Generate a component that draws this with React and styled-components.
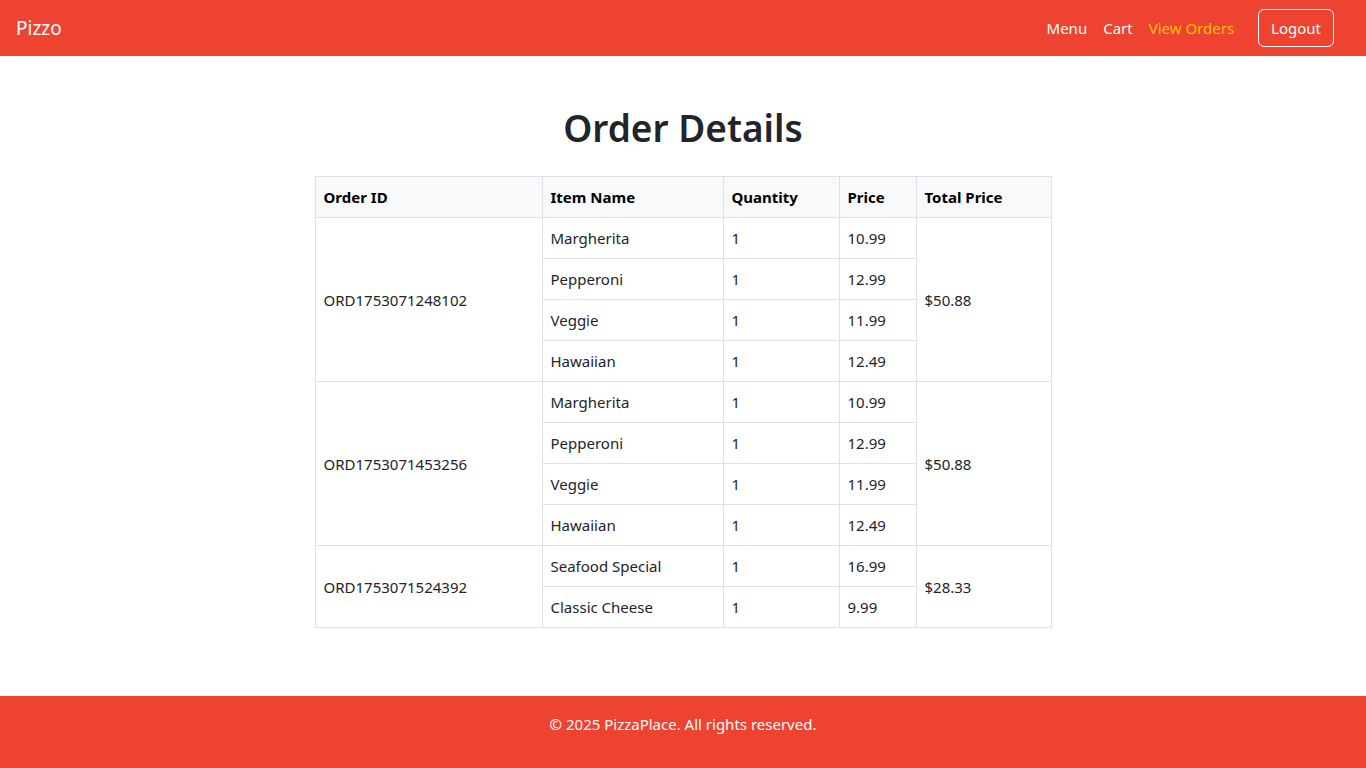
import React from 'react';
import styled, { createGlobalStyle } from 'styled-components';

const GlobalStyle = createGlobalStyle`
    * {
        box-sizing: border-box;
    }

    body {
        margin: 0;
        font-family: "Noto Sans", "Open Sans", sans-serif;
        font-size: 15px;
        line-height: 24px;
        color: #212529;
        background: #fff;
    }
`;

const Page = styled.div`
    min-height: 768px;
    display: flex;
    flex-direction: column;
`;

const Navbar = styled.nav`
    height: 56px;
    background-color: #ee4331;
    display: flex;
    align-items: center;
    justify-content: space-between;
    padding: 0 32px 0 16px;
`;

const Brand = styled.a`
    color: #fff;
    font-size: 19px;
    text-decoration: none;
`;

const NavLinks = styled.div`
    display: flex;
    align-items: center;
    gap: 16px;
`;

const NavLink = styled.a`
    color: ${props => props.active ? '#ffc107' : '#fff'};
    text-decoration: none;
    font-size: 15px;
`;

const LogoutButton = styled.button`
    margin-left: 8px;
    background: transparent;
    color: #fff;
    border: 1px solid #fff;
    border-radius: 6px;
    padding: 6px 12px;
    font-family: inherit;
    font-size: 15px;
    line-height: 24px;
`;

const Main = styled.main`
    flex: 1 0 auto;
    padding-top: 48px;
    padding-bottom: 68px;
    display: flex;
    flex-direction: column;
    align-items: center;
`;

const Title = styled.h1`
    margin: 0 0 24px;
    font-size: 37px;
    font-weight: 600;
    line-height: 48px;
`;

const OrdersTable = styled.table`
    width: 736px;
    table-layout: fixed;
    border-collapse: collapse;

    th, td {
        border: 1px solid #dee2e6;
        padding: 8px;
        text-align: left;
        vertical-align: middle;
        font-size: 15px;
        line-height: 24px;
    }

    th {
        background: #f8f9fa;
        font-weight: 700;
        color: #000;
    }
`;

const Footer = styled.footer`
    height: 72px;
    background-color: #ee4331;
    color: #fff;
    text-align: center;
    padding-top: 16px;
    font-size: 15px;
`;

const orders = [
    {
        id: 'ORD1753071248102',
        total: '$50.88',
        items: [
            { name: 'Margherita', qty: 1, price: '10.99' },
            { name: 'Pepperoni', qty: 1, price: '12.99' },
            { name: 'Veggie', qty: 1, price: '11.99' },
            { name: 'Hawaiian', qty: 1, price: '12.49' },
        ],
    },
    {
        id: 'ORD1753071453256',
        total: '$50.88',
        items: [
            { name: 'Margherita', qty: 1, price: '10.99' },
            { name: 'Pepperoni', qty: 1, price: '12.99' },
            { name: 'Veggie', qty: 1, price: '11.99' },
            { name: 'Hawaiian', qty: 1, price: '12.49' },
        ],
    },
    {
        id: 'ORD1753071524392',
        total: '$28.33',
        items: [
            { name: 'Seafood Special', qty: 1, price: '16.99' },
            { name: 'Classic Cheese', qty: 1, price: '9.99' },
        ],
    },
];

const App = () => {
    return (
        <Page>
            <GlobalStyle />
            <Navbar>
                <Brand href="#">Pizzo</Brand>
                <NavLinks>
                    <NavLink href="#">Menu</NavLink>
                    <NavLink href="#">Cart</NavLink>
                    <NavLink href="#" active>View Orders</NavLink>
                    <LogoutButton>Logout</LogoutButton>
                </NavLinks>
            </Navbar>
            <Main>
                <Title>Order Details</Title>
                <OrdersTable>
                    <colgroup>
                        <col style={{ width: 227 }} />
                        <col style={{ width: 181 }} />
                        <col style={{ width: 116 }} />
                        <col style={{ width: 77 }} />
                        <col style={{ width: 135 }} />
                    </colgroup>
                    <thead>
                        <tr>
                            <th>Order ID</th>
                            <th>Item Name</th>
                            <th>Quantity</th>
                            <th>Price</th>
                            <th>Total Price</th>
                        </tr>
                    </thead>
                    <tbody>
                        {orders.map(order => order.items.map((item, i) => (
                            <tr key={order.id + i}>
                                {i === 0 && <td rowSpan={order.items.length}>{order.id}</td>}
                                <td>{item.name}</td>
                                <td>{item.qty}</td>
                                <td>{item.price}</td>
                                {i === 0 && <td rowSpan={order.items.length}>{order.total}</td>}
                            </tr>
                        )))}
                    </tbody>
                </OrdersTable>
            </Main>
            <Footer>© 2025 PizzaPlace. All rights reserved.</Footer>
        </Page>
    );
};

export default App;
